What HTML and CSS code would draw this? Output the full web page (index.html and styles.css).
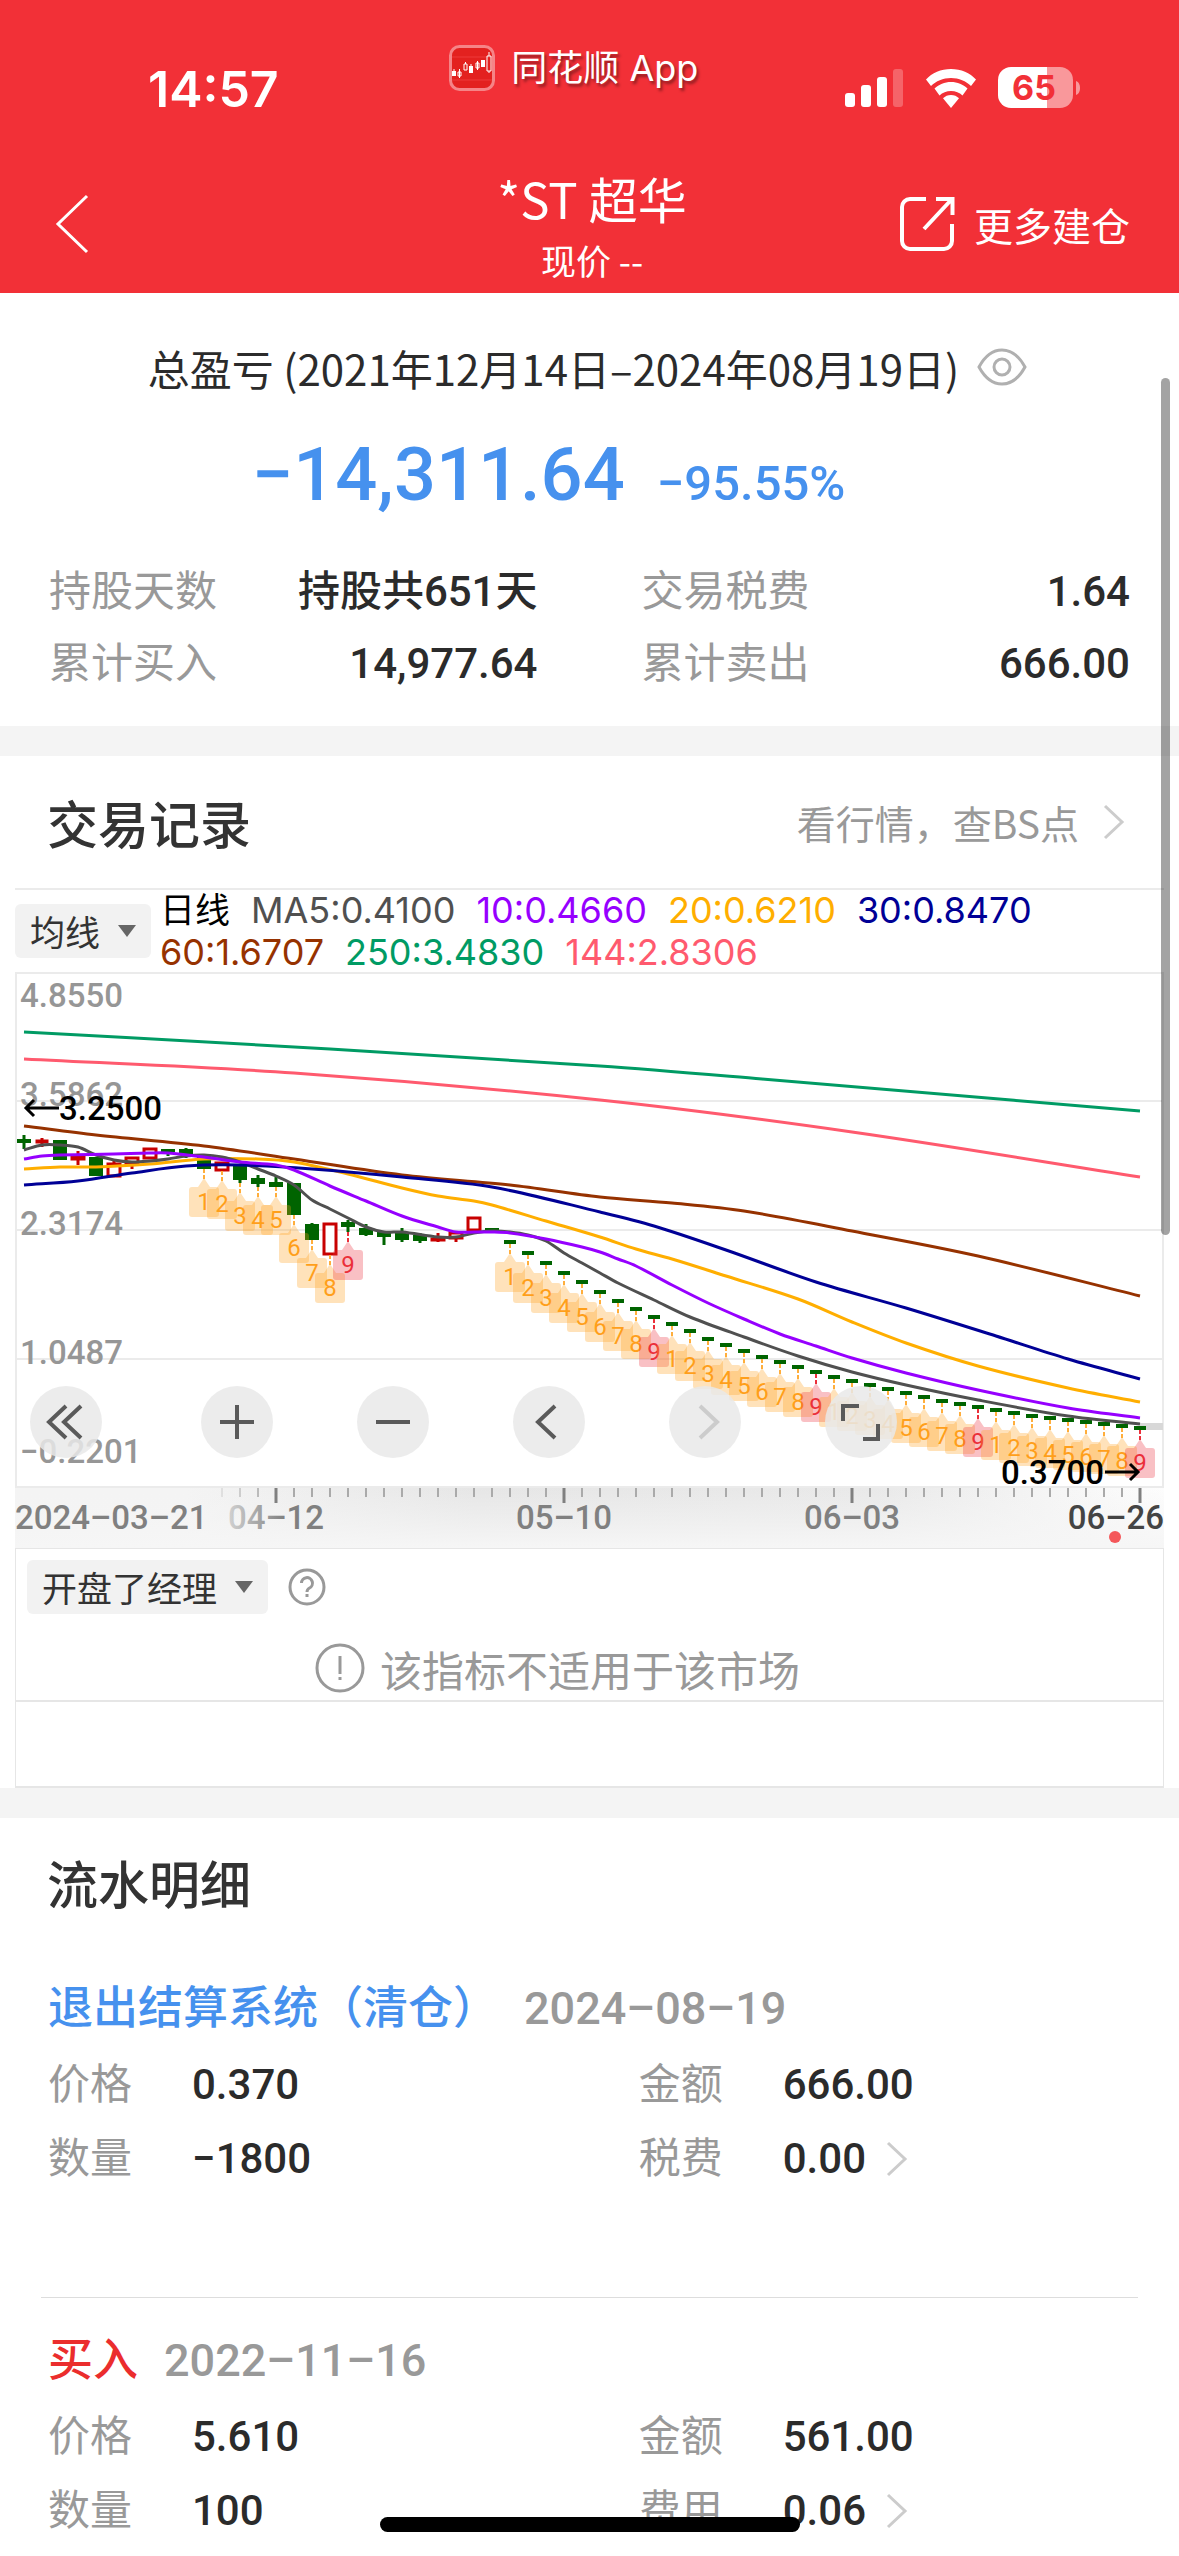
FILE: index.html
```html
<!DOCTYPE html>
<html lang="zh-CN">
<head>
    <meta charset="UTF-8">
    <meta name="viewport" content="width=device-width, initial-scale=1.0">
    <title>*ST超华 - 交易记录</title>
    <link rel="stylesheet" href="styles.css">
</head>
<body>
    <header class="header">
        <div class="status">
            <span class="time">14:57</span>
            <div class="app">
                <svg width="46" height="46" viewBox="0 0 46 46">
                    <rect x="1.5" y="1.5" width="43" height="43" rx="9" fill="#e3211f" stroke="#f58487" stroke-width="3"/>
                    <path d="M3 12H43M3 35H43" stroke="#ee3a3a" stroke-width="1"/>
                    <g fill="#fff">
                        <rect x="3" y="26" width="4" height="5"/>
                        <rect x="20" y="21" width="4" height="7"/>
                        <rect x="32" y="15" width="4" height="7"/>
                    </g>
                    <path d="M9 27h3v4h-3zM10.500 24v9M15 19h3v6h-3zM16.500 17v2M27 18h3v5h-3zM28.500 16v9M38 11h4v15h-4zM40 7v4M40 26v2M22 19v2M5 24v2" fill="none" stroke="#fff"/>
                </svg>
                <span>同花顺 App</span>
            </div>
            <svg class="signals" width="236" height="42" viewBox="0 0 236 42">
                <g fill="#fff">
                    <rect x="0" y="26" width="10" height="14" rx="3"/>
                    <rect x="16" y="18" width="10" height="22" rx="3"/>
                    <rect x="32" y="10" width="10" height="30" rx="3"/>
                    <rect x="48" y="2" width="10" height="38" rx="3" opacity=".25"/>
                    <path d="M106 2c10 0 19 4 25 10.500l-5 6.500c-5-5-12-8-20-8s-15 3-20 8l-5-6.500C87 6 96 2 106 2z"/>
                    <path d="M106 15c6.500 0 12 2.500 16.500 6.500l-5 7c-3-3-7-4.500-11.500-4.500s-8.500 1.500-11.500 4.500l-5-7C94 17.500 99.500 15 106 15z"/>
                    <path d="M106 28c3 0 6 1.200 8 3.300L106 41l-8-9.700c2-2.100 5-3.300 8-3.300z"/>
                    <path d="M166 0h36v41h-36a13 13 0 0 1-13-13V13a13 13 0 0 1 13-13z"/>
                    <path d="M202 0h13a13 13 0 0 1 13 13v15a13 13 0 0 1-13 13h-13z" opacity=".5"/>
                    <path d="M231 14c3 1 4 4 4 7s-1 6-4 7z" opacity=".5"/>
                </g>
                <text class="battery" x="189" y="33">65</text>
            </svg>
        </div>
        <nav class="nav">
            <button class="back" aria-label="返回">
                <svg width="36" height="62" viewBox="0 0 36 62"><path d="M33 3L4 31l29 28" fill="none" stroke="#fff" stroke-width="3"/></svg>
            </button>
            <div class="stock">
                <h1>*ST 超华</h1>
                <p>现价 --</p>
            </div>
            <a class="more" href="#">
                <svg width="56" height="56" viewBox="0 0 56 56"><path d="M26 3H10a8 8 0 0 0-8 8v34a8 8 0 0 0 8 8h34a8 8 0 0 0 8-8V28M36 3h16.500v16M52 3L24 33" fill="none" stroke="#fff" stroke-width="4"/></svg>
                <span>更多建仓</span>
            </a>
        </nav>
    </header>

    <main>
        <section class="summary">
            <div class="period">
                <span>总盈亏 (2021年12月14日–2024年08月19日)</span>
                <button aria-label="隐藏金额">
                    <svg width="50" height="38" viewBox="0 0 50 38" fill="none" stroke="#b0b0b0" stroke-width="3">
                        <path d="M2 19C8 8 16 2 25 2s17 6 23 17c-6 11-14 17-23 17S8 30 2 19z"/>
                        <circle cx="25" cy="19" r="8"/>
                    </svg>
                </button>
            </div>
            <div class="profit"><strong>−14,311.64</strong><span>−95.55%</span></div>
            <dl class="stats">
                <div><dt>持股天数</dt><dd>持股共651天</dd></div>
                <div><dt>交易税费</dt><dd>1.64</dd></div>
                <div><dt>累计买入</dt><dd>14,977.64</dd></div>
                <div><dt>累计卖出</dt><dd>666.00</dd></div>
            </dl>
        </section>

        <section class="record">
            <div class="section-head">
                <h2>交易记录</h2>
                <a href="#">看行情，查BS点
                    <svg class="arrow" width="22" height="36" viewBox="0 0 22 36"><path d="M2 2l17 16L2 34"/></svg>
                </a>
            </div>
            <div class="chart">
                <div class="legend">
                    <div class="picker"><select aria-label="主图指标"><option>均线</option></select></div>
                    <div class="averages">
                        <div><b>日线</b><span class="ma5">MA5:0.4100</span><span class="ma10">10:0.4660</span><span class="ma20">20:0.6210</span><span class="ma30">30:0.8470</span></div>
                        <div><span class="ma60">60:1.6707</span><span class="ma250">250:3.4830</span><span class="ma144">144:2.8306</span></div>
                    </div>
                </div>
                <div class="plot">
                    <svg id="kline" viewBox="0 0 1149 576">
                        <defs>
                            <linearGradient id="across">
                                <stop offset="0.15" stop-color="#f4f4f4"/>
                                <stop offset="0.4" stop-color="#e6e6e6"/>
                                <stop offset="0.75" stop-color="#e9e9e9"/>
                                <stop offset="1" stop-color="#fdfdfd"/>
                            </linearGradient>
                            <linearGradient id="down" x2="0" y2="1">
                                <stop offset="0" stop-color="#f4f4f4" stop-opacity="0"/>
                                <stop offset="1" stop-color="#f6f6f6"/>
                            </linearGradient>
                            <linearGradient id="fade" gradientUnits="userSpaceOnUse" x1="205" x2="270" y1="0" y2="0">
                                <stop offset="0" stop-color="#808080" stop-opacity=".2"/>
                                <stop offset="1" stop-color="#808080"/>
                            </linearGradient>
                        </defs>
                        <g class="grid"><path d="M1 1H1148V515H1zM1 129H1148M1 258H1148M1 387H1148"/></g>
                        <g class="scale">
                            <text x="5" y="35">4.8550</text>
                            <text x="5" y="134">3.5862</text>
                            <text x="5" y="263">2.3174</text>
                            <text x="5" y="392">1.0487</text>
                            <text x="5" y="491">−0.2201</text>
                        </g>
                        <rect x="1125" y="451" width="23" height="7" fill="#d8d8d8"/>
                        <g id="candles"></g>
                        <g id="lines"></g>
                        <g id="marks"></g>
                        <g class="extreme">
                            <path d="M44 136H11M19 128l-8 8 8 8M1090 500h33M1115 492l8 8-8 8"/>
                            <text x="44" y="148">3.2500</text>
                            <text x="1089" y="512" text-anchor="end">0.3700</text>
                        </g>
                        <rect x="0" y="516" width="1149" height="60" fill="url(#across)"/>
                        <rect x="0" y="516" width="1149" height="60" fill="url(#down)"/>
                        <g id="ticks"></g>
                        <g class="dates">
                            <text x="0" y="557">2024–03–21</text>
                            <text x="261" y="557" text-anchor="middle" fill="url(#fade)">04–12</text>
                            <text x="549" y="557" text-anchor="middle">05–10</text>
                            <text x="837" y="557" text-anchor="middle">06–03</text>
                            <text class="latest" x="1149" y="557" text-anchor="end">06–26</text>
                        </g>
                        <circle cx="1100" cy="565" r="6" fill="#f4575a"/>
                    </svg>
                    <div class="controls">
                        <button class="first" aria-label="最早"><svg viewBox="0 0 72 72"><path d="M36 20L19 36l17 16M51 20L34 36l17 16"/></svg></button>
                        <button aria-label="放大"><svg viewBox="0 0 72 72"><path d="M36 19V53M19 36H53"/></svg></button>
                        <button aria-label="缩小"><svg viewBox="0 0 72 72"><path d="M19 36H53"/></svg></button>
                        <button aria-label="左移"><svg viewBox="0 0 72 72"><path d="M42 20L25 36l17 16"/></svg></button>
                        <button aria-label="右移" disabled><svg viewBox="0 0 72 72"><path d="M31 20l17 16-17 16"/></svg></button>
                        <button aria-label="全屏"><svg viewBox="0 0 72 72"><path d="M18 35V20H34M38 53H53V38"/></svg></button>
                    </div>
                </div>
                <div class="indicator">
                    <div class="indicator-bar">
                        <div class="picker"><select aria-label="副图指标"><option>开盘了经理</option></select></div>
                        <button aria-label="指标说明">
                            <svg width="38" height="38" viewBox="0 0 38 38" fill="none" stroke="#999" stroke-width="3">
                                <circle cx="19" cy="19" r="17"/>
                                <path d="M13.500 15a5.500 5.500 0 1 1 8 5c-2 1-2.500 2-2.500 4M19 26v3"/>
                            </svg>
                        </button>
                    </div>
                    <p class="notice">
                        <svg width="50" height="50" viewBox="0 0 50 50" fill="none" stroke="#999" stroke-width="3">
                            <circle cx="25" cy="25" r="23"/>
                            <path d="M25 13V31M25 34V37"/>
                        </svg>
                        该指标不适用于该市场
                    </p>
                </div>
                <div class="empty"></div>
            </div>
        </section>

        <section class="flow">
            <div class="section-head"><h2>流水明细</h2></div>
            <article class="deal">
                <h3 class="exit">退出结算系统（清仓）<time>2024–08–19</time></h3>
                <dl>
                    <div><dt>价格</dt><dd>0.370</dd></div>
                    <div><dt>金额</dt><dd>666.00</dd></div>
                    <div><dt>数量</dt><dd>−1800</dd></div>
                    <div><dt>税费</dt><dd><a href="#">0.00 <svg class="arrow" width="22" height="36" viewBox="0 0 22 36"><path d="M2 2l17 16L2 34"/></svg></a></dd></div>
                </dl>
            </article>
            <article class="deal">
                <h3 class="buy">买入<time>2022–11–16</time></h3>
                <dl>
                    <div><dt>价格</dt><dd>5.610</dd></div>
                    <div><dt>金额</dt><dd>561.00</dd></div>
                    <div><dt>数量</dt><dd>100</dd></div>
                    <div><dt>费用</dt><dd><a href="#">0.06 <svg class="arrow" width="22" height="36" viewBox="0 0 22 36"><path d="M2 2l17 16L2 34"/></svg></a></dd></div>
                </dl>
            </article>
        </section>
    </main>
    <div class="scrollbar"></div>
    <div class="home-bar"></div>

    <script>
        const STEP = 18;
        const xAt = i => 9 + i * STEP;

        // [colour, body top, body bottom, high, low]
        const candles = [
            ['g', 167, 171, 163, 177], ['r', 168, 171, 166, 175], ['g', 168, 188, 168, 188],
            ['r', 184, 188, 179, 193], ['g', 185, 204, 185, 204], ['r', 191, 205, 189, 205],
            ['r', 185, 192, 185, 197], ['r', 176, 187, 176, 187], ['g', 177, 180, 177, 184],
            ['g', 177, 183, 176, 186], ['g', 182, 197, 182, 197], ['r', 190, 199, 190, 199],
            ['g', 193, 208, 193, 211], ['g', 206, 212, 203, 215], ['g', 210, 215, 205, 215],
            ['g', 211, 243, 211, 243], ['g', 252, 268, 251, 268], ['r', 251, 283, 251, 283],
            ['g', 250, 255, 248, 260], ['g', 256, 263, 252, 264], ['g', 259, 265, 259, 273],
            ['g', 261, 268, 256, 270], ['g', 263, 269, 261, 271], ['r', 266, 269, 261, 270],
            ['r', 260, 267, 260, 270], ['r', 245, 259, 245, 259], ['g', 256, 258, 256, 258]
        ];
        // limit-down days, flat candles
        [270, 281, 291, 301, 310, 320, 329, 337, 345, 352, 359, 367,
         373, 379, 385, 390, 395, 400, 405, 409, 413, 417, 421, 425,
         429, 432, 435, 438, 441, 444, 446, 448, 450, 452, 454, 456]
            .forEach(y => candles.push(['g', y - 2, y + 2, y - 2, y + 2]));

        const averages = {
            ma250: [[0, 60], [17, 77], [32, 94], [41, 107], [62, 139]],
            ma144: [[0, 87], [15, 101], [32, 128], [46, 160], [62, 205]],
            ma60: [[0, 154], [4, 163], [10, 174], [15, 187], [21, 203], [27, 213], [32, 225], [36, 231], [40, 239], [46, 259], [53, 284], [62, 324]],
            ma20: [[0, 197], [2, 195], [4, 195], [7, 192], [10, 187], [13, 187], [15, 190], [18, 202], [21, 216], [23, 224], [25, 229], [26, 233], [29, 249], [32, 265], [34, 277], [36, 287], [39, 304], [43, 327], [46, 350], [49, 371], [53, 394], [58, 416], [62, 430]],
            ma5: [[0, 178], [1, 173], [2, 173], [3, 175], [4, 183], [5, 188], [6, 190], [7, 189], [8, 187], [9, 184], [10, 183], [11, 185], [12, 190], [13, 197], [14, 204], [15, 213], [16, 228], [17, 237], [18, 246], [19, 255], [20, 260], [21, 260], [23, 265], [24, 265], [25, 261], [26, 259], [27, 260], [28, 263], [29, 269], [30, 281], [31, 291], [32, 301], [33, 311], [35, 328], [37, 345], [40, 365], [43, 384], [46, 400], [49, 413], [53, 428], [58, 444], [62, 452]],
            ma30: [[0, 213], [3, 209], [6, 201], [9, 194], [12, 193], [16, 197], [21, 205], [26, 215], [32, 240], [35, 254], [39, 278], [44, 310], [49, 336], [54, 364], [58, 387], [62, 407]],
            ma10: [[0, 187], [1, 184], [2, 183], [5, 182], [7, 181], [8, 181], [10, 185], [12, 190], [14, 193], [15, 198], [17, 214], [19, 229], [21, 244], [23, 255], [24, 260], [25, 260], [26, 260], [27, 261], [29, 267], [31, 275], [32, 280], [33, 287], [34, 294], [36, 313], [38, 331], [40, 347], [42, 362], [44, 374], [46, 386], [49, 401], [53, 418], [58, 436], [62, 446]]
        };

        document.getElementById('candles').innerHTML = candles.map(([c, top, bottom, high, low], i) => {
            const x = xAt(i);
            const flat = i > 26 || i === 1;
            const half = flat ? 6 : 7;
            if (c === 'g') {
                return `<path class="down" d="M${x - half} ${top}h${half * 2}V${bottom}h${-half * 2}zM${x - 1.5} ${high}h3V${low}h-3z"/>`;
            }
            return `<path class="up" d="M${x - half + 1} ${top + 1}h${half * 2 - 2}V${bottom - 1}h${2 - half * 2}zM${x} ${high}V${top}M${x} ${bottom}V${low}"/>`;
        }).join('');

        // Catmull-Rom through the averages
        function curve(points) {
            const p = points.map(([i, y]) => [xAt(i), y]);
            let d = `M${p[0]}`;
            for (let i = 0; i < p.length - 1; i++) {
                const a = p[i - 1] || p[i], b = p[i], c = p[i + 1], e = p[i + 2] || c;
                const third = (c[0] - b[0]) / 3;
                const m1 = (c[1] - a[1]) / (c[0] - a[0]);
                const m2 = (e[1] - b[1]) / (e[0] - b[0]);
                d += `C${b[0] + third} ${b[1] + m1 * third} ${c[0] - third} ${c[1] - m2 * third} ${c}`;
            }
            return d;
        }
        document.getElementById('lines').innerHTML = Object.entries(averages)
            .map(([name, points]) => `<path class="${name}" d="${curve(points)}"/>`).join('');

        // nine-count marks
        let marks = '';
        candles.forEach((candle, i) => {
            if (i < 10 || (i > 18 && i < 27)) return;
            const n = i < 19 ? i - 9 : (i - 27) % 9 + 1;
            const x = xAt(i), low = candle[4];
            marks += `<g class="${n === 9 ? 'nine' : 'count'}">
                <path class="stem" d="M${x} ${low}v12"/>
                <path class="flag" d="M${x} ${low + 9}l6 9h6q3 0 3 3v24q0 3-3 3h-24q-3 0-3-3v-24q0-3 3-3h6z"/>
                <text x="${x}" y="${low + 41}">${n}</text></g>`;
        });
        document.getElementById('marks').innerHTML = marks;

        let ticks = '';
        for (let i = 11; i < 63; i++) {
            const major = i % 16 === 14;
            ticks += `<path class="${major ? 'major' : ''}" opacity="${Math.min(1, (i - 10) / 4)}" d="M${xAt(i)} 516v${major ? 15 : 9}"/>`;
        }
        document.getElementById('ticks').innerHTML = ticks;
    </script>
</body>
</html>
```
FILE: styles.css
```css
* {
    box-sizing: border-box;
}
body {
    position: relative;
    margin: 0;
    background: #fff;
    color: #2b2b2b;
    font-family: Roboto, "Noto Sans CJK SC", sans-serif;
    font-size: 42px;
}
h1, h2, h3, p, dl, dd {
    margin: 0;
}
button {
    display: flex;
    padding: 0;
    border: 0;
    background: none;
}
a {
    color: inherit;
    text-decoration: none;
}
svg {
    display: block;
    flex: none;
}

/* header */
.header {
    background: #f23037;
    color: #fff;
    height: 293px;
}
.status {
    display: flex;
    justify-content: space-between;
    align-items: flex-start;
    padding: 44px 98px 0 148px;
    height: 152px;
}
.time {
    margin: 20px 24px 0 0;
    font: 600 50px/50px Inter, sans-serif;
}
.app {
    display: flex;
    align-items: center;
    gap: 16px;
    font: 36px/48px Inter, "Noto Sans CJK SC", sans-serif;
    text-shadow: 2px 3px 3px rgba(0, 0, 0, 0.4);
}
.signals {
    margin-top: 23px;
}
.battery {
    font: 700 34px Inter, sans-serif;
    fill: #f23037;
    text-anchor: middle;
}
.nav {
    display: grid;
    grid-template-columns: 1fr auto 1fr;
    align-items: center;
    padding: 10px 49px 0 54px;
}
.stock {
    text-align: center;
}
.stock h1 {
    font: 400 49px/72px "Noto Sans CJK SC", sans-serif;
}
.stock p {
    font: 35px/52px "Noto Sans CJK SC", sans-serif;
}
.more {
    justify-self: end;
    display: flex;
    align-items: center;
    gap: 18px;
    font-size: 39px;
}

/* profit summary */
.summary {
    padding: 44px 49px 26px;
}
.period {
    display: flex;
    justify-content: center;
    align-items: center;
    gap: 18px;
    height: 60px;
    padding-right: 4px;
    font-family: "Noto Sans CJK SC", sans-serif;
}
.profit {
    display: flex;
    justify-content: center;
    align-items: baseline;
    gap: 32px;
    padding: 34px 82px 0 0;
    height: 159px;
    color: #4691ee;
    font-size: 49px;
    font-weight: 500;
}
.profit strong {
    font-size: 74px;
    font-weight: 500;
}
.stats {
    display: grid;
    grid-template-columns: 1fr 1fr;
    column-gap: 104px;
}
.stats div {
    display: flex;
    justify-content: space-between;
    line-height: 72px;
}
dt {
    color: #999;
}
dd {
    font-weight: 500;
}

/* sections */
.record, .flow {
    border-top: 30px solid #f4f4f4;
}
.section-head {
    display: flex;
    justify-content: space-between;
    align-items: center;
    height: 132px;
    padding: 0 54px 0 47px;
}
.flow .section-head {
    height: 128px;
}
h2 {
    color: #333;
    font-size: 51px;
    font-weight: 500;
}
.section-head a {
    display: flex;
    align-items: center;
    gap: 24px;
    color: #999;
    font-family: "Noto Sans CJK SC", sans-serif;
    font-size: 39px;
}
.arrow {
    fill: none;
    stroke: #ccc;
    stroke-width: 3;
}

/* chart */
.chart {
    margin: 0 15px;
    border-top: 2px solid #ebebeb;
}
.legend {
    display: flex;
    align-items: center;
    gap: 9px;
    height: 82px;
    font: 36px/42px Inter, "Noto Sans CJK SC", sans-serif;
}
.averages div {
    display: flex;
    gap: 21px;
}
.averages b {
    color: #000;
    font-size: 35px;
    font-weight: 400;
}
.ma5 { color: #505050; stroke: #505050; }
.ma10 { color: #9600ff; stroke: #9600ff; }
.ma20 { color: #ffae00; stroke: #ffae00; }
.ma30 { color: #000096; stroke: #000096; }
.ma60 { color: #963200; stroke: #963200; }
.ma250 { color: #009b64; stroke: #009b64; }
.ma144 { color: #ff5a6e; stroke: #ff5a6e; }
.picker {
    position: relative;
}
.picker select {
    display: block;
    appearance: none;
    height: 54px;
    padding: 0 50px 0 15px;
    border: 0;
    border-radius: 6px;
    background: #f2f2f2;
    color: #333;
    font: 35px/54px "Noto Sans CJK SC", sans-serif;
}
.picker::after {
    content: "";
    position: absolute;
    right: 15px;
    top: 21px;
    border: 9px solid transparent;
    border-top: 12px solid #666;
    border-bottom: 0;
    pointer-events: none;
}
.plot {
    position: relative;
}
#kline {
    width: 100%;
    font-size: 33px;
}
.grid path {
    fill: none;
    stroke: #ebebeb;
    stroke-width: 2;
}
.scale text {
    fill: #969696;
    font-weight: 500;
}
.down {
    fill: #006400;
}
.up {
    fill: #fff;
    stroke: #c80000;
    stroke-width: 3;
}
#lines path {
    fill: none;
    stroke-width: 3;
}
#marks text {
    font-size: 24px;
    text-anchor: middle;
}
.count { fill: #ff9f1a; }
.nine { fill: #eb2f3a; }
.flag {
    opacity: 0.3;
}
.stem {
    stroke: #ffae3c;
    stroke-width: 2;
    stroke-dasharray: 4 2;
}
.nine .stem {
    stroke: #eb2f3a;
}
.extreme {
    font-weight: 500;
}
.extreme path {
    fill: none;
    stroke: #000;
    stroke-width: 3;
}
#ticks path {
    stroke: #aaa;
    stroke-width: 2;
}
#ticks .major {
    stroke: #808080;
    stroke-width: 3;
}
.dates {
    fill: #808080;
    font-weight: 500;
}
.latest {
    fill: #444;
}
.controls {
    position: absolute;
    left: 15px;
    bottom: 90px;
    display: flex;
    gap: 84px;
}
.controls .first {
    margin-right: 15px;
}
.controls button {
    width: 72px;
    height: 72px;
    border-radius: 50%;
    background: rgba(233, 233, 233, 0.85);
}
.controls path {
    fill: none;
    stroke: #5a5a5a;
    stroke-width: 4;
}
.controls button:disabled path {
    stroke: #ccc;
}

/* sub indicator */
.indicator, .empty {
    border: 1px solid #e6e6e6;
}
.indicator {
    height: 153px;
    padding: 11px;
}
.indicator-bar {
    display: flex;
    align-items: center;
    gap: 20px;
}
.notice {
    display: flex;
    justify-content: center;
    align-items: center;
    gap: 15px;
    padding-right: 64px;
    height: 108px;
    color: #999;
}
.empty {
    height: 87px;
    border-bottom-width: 2px;
}

/* deals */
.deal {
    margin: 0 41px;
    padding: 30px 7px 101px;
}
.deal + .deal {
    border-top: 1px solid #ddd;
    padding-bottom: 0;
}
.deal h3 {
    display: flex;
    gap: 26px;
    margin-bottom: 6px;
    font-size: 45px;
    font-weight: 500;
    line-height: 66px;
}
.deal .buy {
    color: #eb2d2d;
}
.deal .exit {
    color: #4691ee;
}
.deal time {
    color: #999;
}
.deal dl {
    display: grid;
    grid-template-columns: 6fr 5fr;
}
.deal dl div {
    display: flex;
    line-height: 74px;
}
.deal dt {
    width: 144px;
}
.deal dd a {
    display: flex;
    align-items: center;
    gap: 20px;
}

.scrollbar {
    position: absolute;
    top: 378px;
    right: 9px;
    width: 9px;
    height: 857px;
    border-radius: 5px;
    background: rgba(0, 0, 0, 0.36);
}
.home-bar {
    position: fixed;
    left: 50%;
    bottom: 24px;
    width: 420px;
    height: 15px;
    margin-left: -210px;
    border-radius: 8px;
    background: #000;
}
```
